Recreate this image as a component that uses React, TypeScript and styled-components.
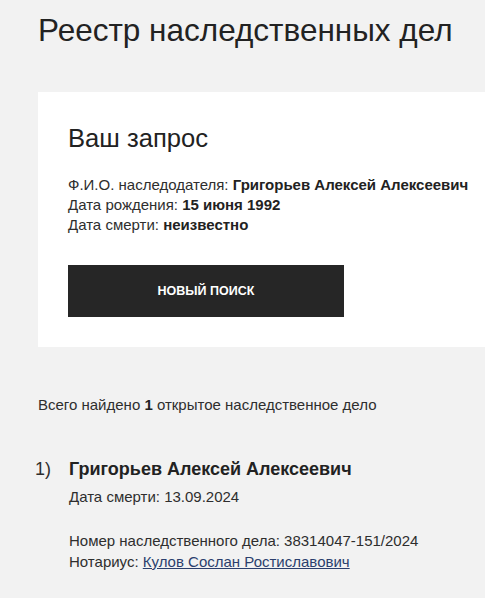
import React from "react";
import styled, { createGlobalStyle } from "styled-components";

const Global = createGlobalStyle`
  html, body { margin: 0; padding: 0; background: #f2f2f2; }
  body { font-family: "Liberation Sans", Arial, sans-serif; color: #222; overflow: hidden; }
`;

const Page = styled.div`
  padding: 12px 0 0 38px;
  width: 485px;
  box-sizing: border-box;
`;

const Title = styled.h1`
  margin: 0;
  font-size: 31.5px;
  font-weight: 400;
  line-height: 36px;
  color: #222;
`;

const Card = styled.section`
  margin-top: 44px;
  background: #fff;
  padding: 32px 30px 30px 30px;
  height: 255px;
  box-sizing: border-box;
`;

const CardTitle = styled.h2`
  margin: 0;
  font-size: 25.6px;
  font-weight: 400;
  line-height: 28px;
  color: #222;
`;

const InfoList = styled.div`
  margin-top: 23px;
  display: flex;
  flex-direction: column;
`;

const Line = styled.div`
  font-size: 15px;
  line-height: 20px;
  color: #2e2e2e;
  white-space: nowrap;
  b { font-weight: 700; color: #222; }
`;

const Button = styled.button`
  margin-top: 30px;
  width: 276px;
  height: 52px;
  border: 0;
  background: #262626;
  color: #fff;
  font-family: inherit;
  font-size: 12.5px;
  font-weight: 700;
  text-transform: uppercase;
  cursor: pointer;
  display: block;
`;

const Summary = styled.p`
  margin: 48px 0 0;
  font-size: 15px;
  line-height: 20px;
  color: #2e2e2e;
  b { font-weight: 700; color: #222; }
`;

const Result = styled.div`
  margin-top: 42px;
  display: grid;
  grid-template-columns: 34px 1fr;
  margin-left: -3px;
`;

const Num = styled.div`
  font-size: 18px;
  line-height: 24px;
  color: #2e2e2e;
`;

const Body = styled.div`
  display: flex;
  flex-direction: column;
`;

const Name = styled.div`
  font-size: 18px;
  font-weight: 700;
  line-height: 24px;
  color: #222;
`;

const Detail = styled.div<{ $gap?: number }>`
  margin-top: ${(p) => p.$gap ?? 0}px;
  font-size: 15px;
  line-height: 21px;
  color: #2e2e2e;
`;

const Link = styled.a`
  color: #2b3f6d;
  text-decoration: underline;
`;

export default function App() {
  return (
    <>
      <Global />
      <Page>
        <Title>Реестр наследственных дел</Title>
        <Card>
          <CardTitle>Ваш запрос</CardTitle>
          <InfoList>
            <Line>
              Ф.И.О. наследодателя: <b>Григорьев Алексей Алексеевич</b>
            </Line>
            <Line>
              Дата рождения: <b>15 июня 1992</b>
            </Line>
            <Line>
              Дата смерти: <b>неизвестно</b>
            </Line>
          </InfoList>
          <Button>Новый поиск</Button>
        </Card>
        <Summary>
          Всего найдено <b>1</b> открытое наследственное дело
        </Summary>
        <Result>
          <Num>1)</Num>
          <Body>
            <Name>Григорьев Алексей Алексеевич</Name>
            <Detail $gap={5}>Дата смерти: 13.09.2024</Detail>
            <Detail $gap={23}>Номер наследственного дела: 38314047-151/2024</Detail>
            <Detail>
              Нотариус: <Link href="#">Кулов Сослан Ростиславович</Link>
            </Detail>
          </Body>
        </Result>
      </Page>
    </>
  );
}
